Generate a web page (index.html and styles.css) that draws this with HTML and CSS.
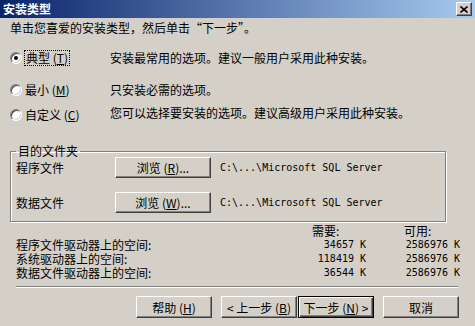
FILE: index.html
```html
<!DOCTYPE html>
<html lang="zh-CN">
<head>
    <meta charset="UTF-8">
    <title>安装类型</title>
    <link rel="stylesheet" href="styles.css">
</head>
<body>
    <div class="window">
        <div class="titlebar">
            <span class="title">安装类型</span>
            <span class="close">
                <svg width="8" height="7" viewBox="0 0 8 7"><path d="M0.5 0.5 L7.5 6.5 M7.5 0.5 L0.5 6.5" stroke="#000" stroke-width="1.6"/></svg>
            </span>
        </div>

        <p class="hint">单击您喜爱的安装类型，然后单击“下一步”。</p>

        <div class="options">
            <div class="opt first">
                <label class="choice"><span class="radio checked"></span><span class="focus">典型 (<u>T</u>)</span></label>
                <span class="desc">安装最常用的选项。建议一般用户采用此种安装。</span>
            </div>
            <div class="opt second">
                <label class="choice"><span class="radio"></span><span>最小 (<u>M</u>)</span></label>
                <span class="desc">只安装必需的选项。</span>
            </div>
            <div class="opt third">
                <label class="choice"><span class="radio"></span><span>自定义 (<u>C</u>)</span></label>
                <span class="desc up">您可以选择要安装的选项。建议高级用户采用此种安装。</span>
            </div>
        </div>

        <fieldset class="group">
            <legend>目的文件夹</legend>
            <div class="folder">
                <span class="name">程序文件</span>
                <button class="btn browse">浏览 (<u>R</u>)...</button>
                <span class="mono">C:\...\Microsoft SQL Server</span>
            </div>
            <div class="folder second">
                <span class="name">数据文件</span>
                <button class="btn browse">浏览 (<u>W</u>)...</button>
                <span class="mono">C:\...\Microsoft SQL Server</span>
            </div>
        </fieldset>

        <div class="space">
            <span></span><span>需要:</span><span>可用:</span>
            <span>程序文件驱动器上的空间:</span><span class="mono num">34657 K</span><span class="mono num">2586976 K</span>
            <span>系统驱动器上的空间:</span><span class="mono num">118419 K</span><span class="mono num">2586976 K</span>
            <span>数据文件驱动器上的空间:</span><span class="mono num">36544 K</span><span class="mono num">2586976 K</span>
        </div>

        <div class="separator"></div>

        <div class="buttons">
            <button class="btn">帮助 (<u>H</u>)</button>
            <div class="pair">
                <button class="btn">&lt; 上一步 (<u>B</u>)</button>
                <button class="btn default">下一步 (<u>N</u>) &gt;</button>
            </div>
            <button class="btn">取消</button>
        </div>
    </div>
</body>
</html>
```

FILE: styles.css
```css
body {
    margin: 0;
    background: #d4d0c8;
    font-family: "Noto Sans CJK SC", sans-serif;
    font-size: 12px;
    color: #000;
}
.window {
    width: 475px;
    height: 326px;
    background: #d4d0c8;
    overflow: hidden;
}
.titlebar {
    height: 18px;
    display: flex;
    align-items: center;
    justify-content: space-between;
    padding: 0 3px 0 3px;
    background: linear-gradient(to right, #0a246a, #a6caf0);
}
.title {
    color: #fff;
    font-weight: bold;
    line-height: 14px;
}
.close {
    width: 16px;
    height: 14px;
    box-sizing: border-box;
    display: flex;
    align-items: center;
    justify-content: center;
    background: #d4d0c8;
    border: 1px solid;
    border-color: #fff #404040 #404040 #fff;
    box-shadow: inset -1px -1px #808080;
}
.hint {
    margin: 3px 0 0 10px;
    line-height: 14px;
}
.opt {
    display: grid;
    grid-template-columns: 100px 1fr;
    align-items: center;
    padding-left: 10px;
    height: 15px;
    line-height: 14px;
}
.opt.first { margin-top: 15px; }
.opt.second { margin-top: 17px; }
.opt.third { margin-top: 10px; }
.desc.up { position: relative; top: -2px; }
.choice {
    display: flex;
    align-items: center;
    gap: 3px;
}
.radio {
    width: 12px;
    height: 12px;
    box-sizing: border-box;
    border-radius: 50%;
    border: 1px solid;
    border-color: #808080 #fff #fff #808080;
    box-shadow: inset 1px 1px #404040, inset -1px -1px #d4d0c8;
    background: #fff;
    display: flex;
    align-items: center;
    justify-content: center;
}
.radio.checked::after {
    content: "";
    width: 4px;
    height: 4px;
    border-radius: 50%;
    background: #000;
}
.focus {
    outline: 1px dotted #000;
    padding: 0 1px;
}
.group {
    margin: 23px 29px 0 10px;
    padding: 0 0 8px 5px;
    border: 1px solid #808080;
    box-shadow: inset 1px 1px #fff, 1px 1px #fff;
}
.group legend {
    padding: 0 2px;
    line-height: 12px;
}
.folder {
    display: flex;
    align-items: center;
    height: 21px;
}
.folder.second { margin-top: 14px; }
.name { width: 99px; }
.mono {
    font-family: "DejaVu Sans Mono", monospace;
    font-size: 10px;
    white-space: nowrap;
}
.space {
    display: grid;
    grid-template-columns: 1fr 54px 56px;
    column-gap: 38px;
    padding: 0 15px 0 16px;
    margin-top: 2px;
    line-height: 14px;
    white-space: nowrap;
}
.num { text-align: right; }
.separator {
    margin: 6px 17px 0 16px;
    border-top: 1px solid #808080;
    border-bottom: 1px solid #fff;
}
.buttons {
    display: flex;
    justify-content: flex-end;
    gap: 9px;
    margin-top: 8px;
    padding-right: 16px;
}
.pair {
    display: flex;
    gap: 1px;
}
.btn {
    width: 76px;
    height: 22px;
    padding: 0;
    font-family: inherit;
    font-size: 12px;
    color: #000;
    background: #d4d0c8;
    border: 1px solid;
    border-color: #fff #404040 #404040 #fff;
    box-shadow: inset -1px -1px #808080;
}
.btn.browse {
    width: 96px;
    height: 21px;
    margin-right: 9px;
}
.btn.default {
    border-color: #000;
    box-shadow: inset 1px 1px #fff, inset -1px -1px #404040, inset -2px -2px #808080;
}
```
